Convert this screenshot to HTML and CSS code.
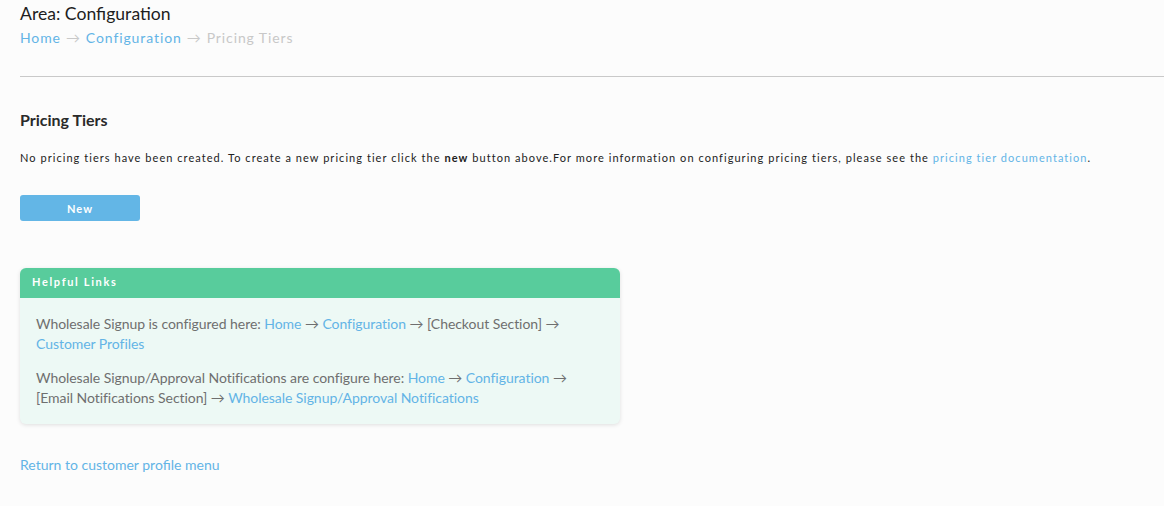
FILE: index.html
```html
<!DOCTYPE html>
<html>
<head>
<meta charset="utf-8">
<link rel="stylesheet" href="styles.css">
</head>
<body>
<div class="page">
  <header class="top">
    <h1 class="area">Area: Configuration</h1>
    <nav class="crumbs">
      <a href="#">Home</a><span class="arr">→</span><a href="#">Configuration</a><span class="arr">→</span><span class="cur">Pricing Tiers</span>
    </nav>
  </header>
  <hr class="rule">
  <section class="main">
    <h2 class="title">Pricing Tiers</h2>
    <p class="info">No pricing tiers have been created. To create a new pricing tier click the <b>new</b> button above.For more information on configuring pricing tiers, please see the <a href="#">pricing tier documentation</a>.</p>
    <button class="btn">New</button>
    <div class="card">
      <div class="card-head">Helpful Links</div>
      <div class="card-body">
        <p>Wholesale Signup is configured here: <a href="#">Home</a> → <a href="#">Configuration</a> → [Checkout Section] → <a href="#">Customer Profiles</a></p>
        <p>Wholesale Signup/Approval Notifications are configure here: <a href="#">Home</a> → <a href="#">Configuration</a> → [Email Notifications Section] → <a href="#">Wholesale Signup/Approval Notifications</a></p>
      </div>
    </div>
    <a class="back" href="#">Return to customer profile menu</a>
  </section>
</div>
</body>
</html>
```
FILE: styles.css
```css
html, body { margin: 0; padding: 0; }
body {
  background: #fcfcfc;
  font-family: Lato, "Open Sans", sans-serif;
  color: #222;
}
a { color: #63b4e6; text-decoration: none; }
.page { padding-left: 20px; }
.top { padding-top: 3px; }
.area {
  margin: 0;
  font-size: 17.6px;
  font-weight: 400;
  line-height: 22px;
  color: #1e1e1e;
}
.crumbs {
  margin-top: 4px;
  font-size: 14px;
  line-height: 17px;
  letter-spacing: 0.9px;
}
.crumbs .arr { color: #c9c9c9; margin: 0 5px 0 5px; }
.crumbs .cur { color: #c8c8c8; }
.rule {
  margin: 30px 0 0 0;
  border: 0;
  border-top: 1px solid #c9c9c9;
  height: 0;
}
.main { padding-top: 33px; }
.title {
  margin: 0;
  font-size: 16px;
  font-weight: 700;
  line-height: 19px;
  color: #2a2a2a;
}
.info {
  margin: 22px 0 0 0;
  font-size: 11px;
  line-height: 13px;
  letter-spacing: 1.05px;
  color: #222;
}
.info b { font-weight: 700; }
.btn {
  display: block;
  margin-top: 31px;
  width: 120px;
  height: 26px;
  border: 0;
  border-radius: 3px;
  background: #63b6e6;
  color: #fff;
  font-family: Lato, sans-serif;
  font-size: 11px;
  font-weight: 700;
  letter-spacing: 1px;
  padding: 0;
}
.card {
  margin-top: 47px;
  width: 600px;
  border-radius: 6px;
  background: #edf9f5;
  box-shadow: 0 1px 4px rgba(0,0,0,0.12);
  overflow: hidden;
}
.card-head {
  background: #58cc9c;
  color: #fff;
  font-size: 11px;
  font-weight: 700;
  letter-spacing: 1.65px;
  height: 30px;
  line-height: 28px;
  padding-left: 12px;
}
.card-body {
  padding: 16px 16px 16px 16px;
  font-size: 14px;
  line-height: 20px;
  letter-spacing: -0.05px;
  color: #6f6f6f;
}
.card-body p { margin: 0 0 14px 0; }
.card-body p:last-child { margin-bottom: 0; }
.back {
  display: inline-block;
  margin-top: 32px;
  font-size: 14px;
  line-height: 17px;
}
```
